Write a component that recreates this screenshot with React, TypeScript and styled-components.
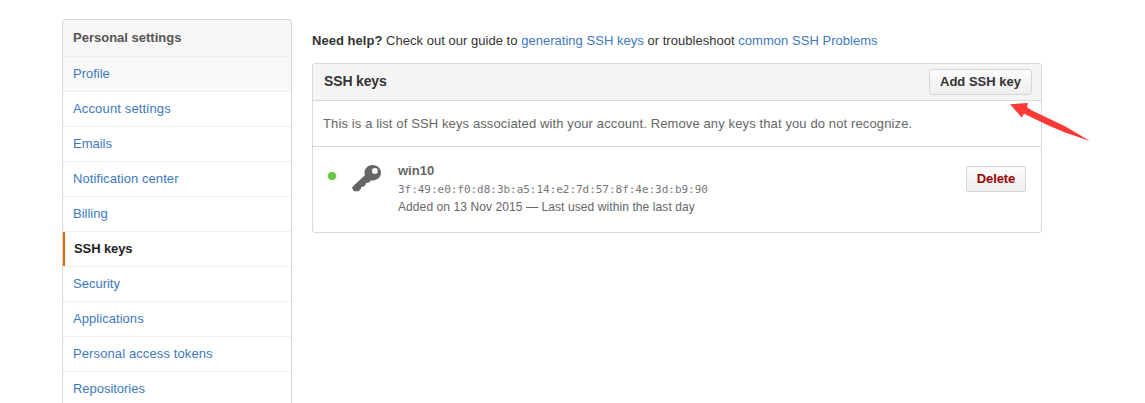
import React from "react";
import styled, { createGlobalStyle } from "styled-components";

const GlobalStyle = createGlobalStyle`
  * { box-sizing: border-box; }
  body {
    margin: 0;
    background: #fff;
    color: #333;
    font: 13px/18px "Liberation Sans", Arial, sans-serif;
    overflow: hidden;
  }
`;

const Page = styled.div`
  display: flex;
  align-items: flex-start;
  gap: 20px;
  height: 403px;
  padding: 19px 0 0 62px;
  overflow: hidden;
`;

const Menu = styled.nav`
  flex: none;
  width: 230px;
  border: 1px solid #d8d8d8;
  border-radius: 3px;
  background: #fff;
  overflow: hidden;
`;

const MenuHeading = styled.h3`
  height: 37px;
  margin: 0;
  padding: 0 10px;
  border-bottom: 1px solid #eee;
  background: #f7f7f7;
  color: #555;
  font-size: 13px;
  line-height: 35px;
`;

const MenuItem = styled.a<{ $tone?: "hover" | "selected"; $spacing?: number }>`
  display: block;
  height: 35px;
  padding: 0 10px 0 ${(p) => (p.$tone === "selected" ? 11 : 10)}px;
  border-bottom: 1px solid #eee;
  line-height: 33px;
  letter-spacing: ${(p) => p.$spacing ?? 0}px;
  color: ${(p) => (p.$tone === "selected" ? "#222" : "#4078c0")};
  font-weight: ${(p) => (p.$tone === "selected" ? "bold" : "normal")};
  background: ${(p) => (p.$tone === "hover" ? "#f8f8f8" : "#fff")};
  box-shadow: ${(p) => (p.$tone === "selected" ? "inset 2px 0 0 #d26911" : "none")};
`;

const Main = styled.main`
  width: 730px;
`;

const Help = styled.p`
  height: 44px;
  margin: 0;
  padding-top: 13px;
  letter-spacing: 0.03px;
  white-space: nowrap;
`;

const Link = styled.a`
  color: #4078c0;
`;

const Panel = styled.section`
  border: 1px solid #d8d8d8;
  border-radius: 3px;
`;

const PanelHeader = styled.header`
  display: flex;
  align-items: center;
  justify-content: space-between;
  height: 37px;
  padding: 0 9px 0 11px;
  border-bottom: 1px solid #d8d8d8;
  background: #f5f5f5;
`;

const PanelTitle = styled.h3`
  margin: 0;
  padding-bottom: 2px;
  font-size: 14px;
  line-height: 18px;
  letter-spacing: -0.15px;
`;

const Button = styled.button<{ $width: number; $danger?: boolean }>`
  width: ${(p) => p.$width}px;
  height: 26px;
  padding: 0 0 1px;
  border: 1px solid #d5d5d5;
  border-radius: 3px;
  background: linear-gradient(#fcfcfc, #eee);
  color: ${(p) => (p.$danger ? "#900" : "#333")};
  font: bold 13px/18px "Liberation Sans", Arial, sans-serif;
  letter-spacing: ${(p) => (p.$danger ? -0.1 : 0)}px;
  white-space: nowrap;
`;

const Description = styled.p`
  height: 46px;
  margin: 0;
  padding: 14px 10px 0;
  border-bottom: 1px solid #d8d8d8;
  color: #666;
  letter-spacing: 0.12px;
  white-space: nowrap;
`;

const KeyRow = styled.div`
  display: flex;
  align-items: flex-start;
  height: 85px;
  padding: 14px 15px 0;
  color: #666;
`;

const Status = styled.span`
  width: 8px;
  height: 8px;
  margin: 11px 16px 0 0;
  border-radius: 50%;
  background: #6cc644;
  box-shadow: 0 0 5px rgba(108, 198, 68, 0.4);
`;

const KeyGlyph = styled.svg`
  width: 30px;
  height: 28px;
  margin: 4px 16px 0 0;
  fill: #666;
`;

const KeyDetails = styled.div`
  flex: 1;
  padding-top: 1px;
  white-space: nowrap;
`;

const KeyName = styled.strong`
  display: block;
`;

const Fingerprint = styled.code`
  display: block;
  height: 18px;
  color: #777;
  font: 11px/20px "DejaVu Sans Mono", monospace;
  letter-spacing: -0.03px;
`;

const Activity = styled.span`
  display: block;
  font-size: 12px;
  letter-spacing: 0.09px;
`;

const DeleteSlot = styled.div`
  padding-top: 5px;
`;

const Pointer = styled.svg`
  position: absolute;
  left: 1005px;
  top: 98px;
  width: 90px;
  height: 46px;
  fill: #fb3a38;
`;

const items: { label: string; tone?: "hover" | "selected"; spacing?: number }[] = [
  { label: "Profile", tone: "hover" },
  { label: "Account settings", spacing: 0.15 },
  { label: "Emails" },
  { label: "Notification center", spacing: 0.08 },
  { label: "Billing" },
  { label: "SSH keys", tone: "selected", spacing: -0.1 },
  { label: "Security" },
  { label: "Applications", spacing: 0.05 },
  { label: "Personal access tokens", spacing: 0.11 },
  { label: "Repositories", spacing: -0.03 },
];

export default function App() {
  return (
    <>
      <GlobalStyle />
      <Page>
        <Menu>
          <MenuHeading>Personal settings</MenuHeading>
          {items.map((item) => (
            <MenuItem key={item.label} $tone={item.tone} $spacing={item.spacing}>
              {item.label}
            </MenuItem>
          ))}
        </Menu>
        <Main>
          <Help>
            <b>Need help?</b> Check out our guide to <Link>generating SSH keys</Link> or troubleshoot{" "}
            <Link>common SSH Problems</Link>
          </Help>
          <Panel>
            <PanelHeader>
              <PanelTitle>SSH keys</PanelTitle>
              <Button $width={103}>Add SSH key</Button>
            </PanelHeader>
            <Description>
              This is a list of SSH keys associated with your account. Remove any keys that you do not recognize.
            </Description>
            <KeyRow>
              <Status />
              <KeyGlyph viewBox="0 0 30 28">
                <path
                  fillRule="evenodd"
                  d="M20.700 0C16 0 12.500 3.500 12.500 7.800c0 1 .1 1.700.4 2.500L.8 21.500C.2 22.100.1 23 .4 23.700l1 1.800c.3.500.8.700 1.300.7h3.300c.6 0 1-.2 1.300-.6l1.600-1.800.4-1.700 2.500-.6 1.600-1.600.5-2 3.100-.5 2.200-2.100c.5.100 1 .2 1.500.2 4.700 0 8.300-3.500 8.300-7.700S25.400 0 20.700 0ZM22.900 8.900a2.900 2.900 0 1 1 0-5.800 2.900 2.900 0 0 1 0 5.800Z"
                />
              </KeyGlyph>
              <KeyDetails>
                <KeyName>win10</KeyName>
                <Fingerprint>3f:49:e0:f0:d8:3b:a5:14:e2:7d:57:8f:4e:3d:b9:90</Fingerprint>
                <Activity>Added on 13 Nov 2015 — Last used within the last day</Activity>
              </KeyDetails>
              <DeleteSlot>
                <Button $width={60} $danger>
                  Delete
                </Button>
              </DeleteSlot>
            </KeyRow>
          </Panel>
        </Main>
      </Page>
      <Pointer viewBox="0 0 90 46">
        <path d="M5 6.200 23 5 22 9.300 27 12.500 60 28.300 85 43 60 34.500 43 27.300 19 15.700 16.700 19.500Z" />
      </Pointer>
    </>
  );
}
